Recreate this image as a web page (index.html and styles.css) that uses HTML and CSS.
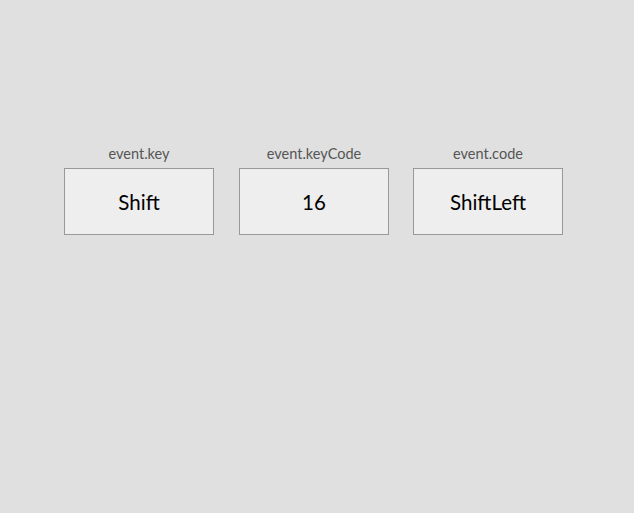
FILE: index.html
```html
<!DOCTYPE html>
<html>
<head>
<meta charset="utf-8">
<link rel="stylesheet" href="styles.css">
</head>
<body>
<div class="row">
  <div class="item">
    <div class="label">event.key</div>
    <div class="box">Shift</div>
  </div>
  <div class="item">
    <div class="label">event.keyCode</div>
    <div class="box">16</div>
  </div>
  <div class="item">
    <div class="label">event.code</div>
    <div class="box">ShiftLeft</div>
  </div>
</div>
</body>
</html>
```
FILE: styles.css
```css
html, body {
  margin: 0;
  padding: 0;
  background: #e0e0e0;
  font-family: "Lato", "Open Sans", sans-serif;
}
.row {
  display: flex;
  padding: 146px 0 0 64px;
}
.item {
  display: flex;
  flex-direction: column;
  align-items: center;
  margin-right: 25px;
}
.item:nth-child(2) {
  margin-right: 24px;
}
.label {
  font-size: 14.5px;
  color: #555;
  line-height: 16px;
  margin-bottom: 6px;
}
.box {
  box-sizing: border-box;
  width: 150px;
  height: 67px;
  border: 1px solid #999;
  background: #eee;
  display: flex;
  align-items: center;
  justify-content: center;
  font-size: 20.5px;
  color: #000;
}
```
